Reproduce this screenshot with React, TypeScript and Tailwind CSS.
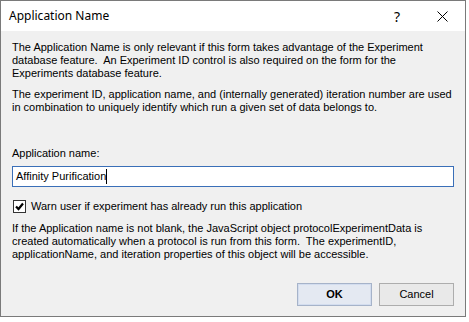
import React from 'react'

export default function App() {
  return (
    <div className="w-[469px] h-[322px] bg-white">
      <div className="w-[466px] h-[317px] border border-[#7a7a7a] bg-[#f0f0f0] flex flex-col">
        <div className="h-[30px] bg-white flex items-center pl-2 text-[12px] text-black font-['Noto_Sans',sans-serif]">
          <span className="flex-1">Application Name</span>
          <span className="w-[44px] text-center text-[14px]">?</span>
          <span className="w-[46px] flex justify-center">
            <svg width="11" height="11" viewBox="0 0 11 11">
              <path d="M0.5 0.5 L10.5 10.5 M10.5 0.5 L0.5 10.5" stroke="#000" strokeWidth="1" fill="none" />
            </svg>
          </span>
        </div>
        <div className="flex-1 flex flex-col pl-[11px] pr-[11px] pt-[10px] text-[11px] leading-[13px] text-black font-['Liberation_Sans',Arial,sans-serif]">
          <p>
            The Application Name is only relevant if this form takes advantage of the Experiment
            database feature.&nbsp; An Experiment ID control is also required on the form for the
            Experiments database feature.
          </p>
          <p className="mt-[8px]">
            The experiment ID, application name, and (internally generated) iteration number are used
            in combination to uniquely identify which run a given set of data belongs to.
          </p>
          <div className="mt-[33px]">Application name:</div>
          <div className="mt-[6px] h-[21px] border border-[#3a6fb8] bg-white flex items-center px-[3px]">
            <span>Affinity Purification</span>
            <span className="w-px h-[15px] bg-black" />
          </div>
          <div className="mt-[13px] flex items-center gap-[5px] pl-px">
            <span className="w-[13px] h-[13px] border border-[#333] bg-white flex items-center justify-center">
              <svg width="9" height="9" viewBox="0 0 9 9">
                <path d="M1 4.5 L3.5 7 L8 1.5" stroke="#000" strokeWidth="2.2" fill="none" />
              </svg>
            </span>
            <span>Warn user if experiment has already run this application</span>
          </div>
          <p className="mt-[9px]">
            If the Application name is not blank, the JavaScript object protocolExperimentData is
            created automatically when a protocol is run from this form.&nbsp; The experimentID,
            applicationName, and iteration properties of this object will be accessible.
          </p>
          <div className="mt-auto mb-[10px] flex justify-end gap-[7px]">
            <button className="w-[75px] h-[23px] border border-[#a6b3c9] bg-[#e4e9f2] shadow-[inset_0_0_0_1px_#d3ddef] font-bold text-[11px]">
              OK
            </button>
            <button className="w-[75px] h-[23px] border border-[#adadad] bg-[#e9e9e9] text-[11px]">
              Cancel
            </button>
          </div>
        </div>
      </div>
    </div>
  )
}
